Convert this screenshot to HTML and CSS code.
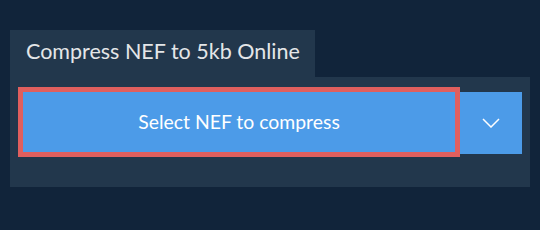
FILE: index.html
```html
<!DOCTYPE html>
<html lang="en">
<head>
    <meta charset="UTF-8">
    <meta name="viewport" content="width=device-width, initial-scale=1.0">
    <title>Compress NEF to 5kb</title>
    <link rel="stylesheet" href="styles.css">
</head>
<body>
    <div class="tool">
        <div class="tab">Compress NEF to 5kb Online</div>
        <div class="panel">
            <button class="select-btn">Select NEF to compress</button>
            <button class="drop-btn" aria-label="More options">
                <svg width="18" height="10" viewBox="0 0 18 10">
                    <path d="M1 1 L9 9 L17 1" fill="none" stroke="#fff" stroke-width="1.5"/>
                </svg>
            </button>
        </div>
    </div>
</body>
</html>
```

FILE: styles.css
```css
* {
    margin: 0;
    padding: 0;
    box-sizing: border-box;
}
body {
    background-color: #11243a;
    font-family: Lato, "Open Sans", sans-serif;
    padding: 30px 10px 0 10px;
}
.tab {
    display: inline-block;
    width: 305px;
    height: 47px;
    background-color: #22374c;
    color: #e4e6e8;
    font-size: 21.5px;
    padding: 8px 0 0 16px;
}
.panel {
    display: flex;
    align-items: flex-start;
    width: 520px;
    height: 110px;
    background-color: #22374c;
    padding: 10px 8px 0 8px;
}
.select-btn {
    width: 442px;
    height: 70px;
    border: 5px solid #e05f5e;
    background-color: #4c9be8;
    color: #fff;
    font-family: inherit;
    font-size: 19.4px;
    padding-bottom: 2px;
    cursor: pointer;
}
.drop-btn {
    width: 62px;
    height: 62px;
    margin-top: 5px;
    border: none;
    background-color: #4c9be8;
    display: flex;
    justify-content: center;
    align-items: center;
    cursor: pointer;
}
```
